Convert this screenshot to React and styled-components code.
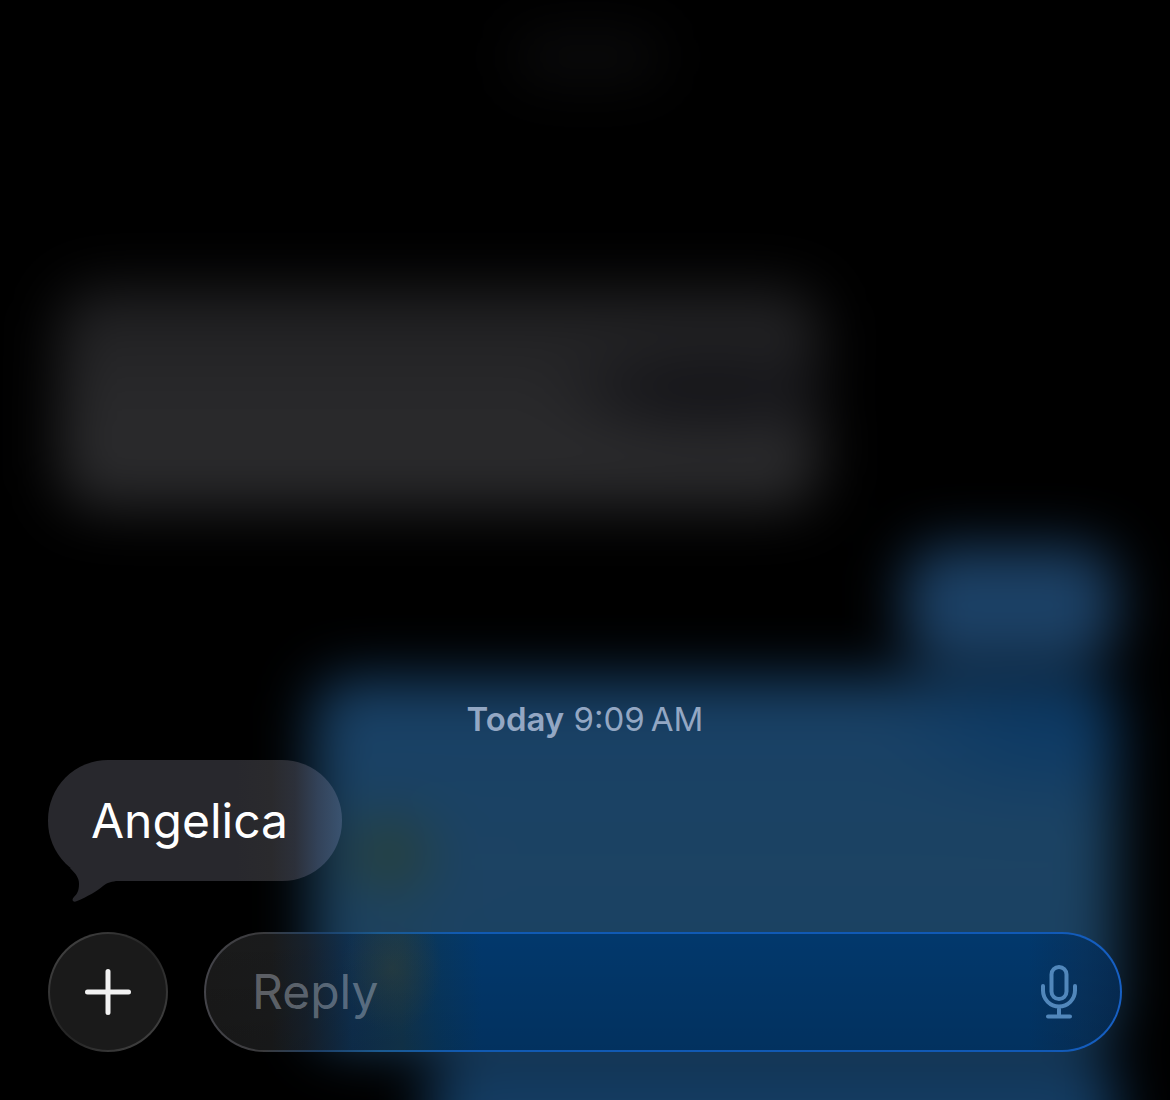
import React, { useState } from 'react';
import styled, { createGlobalStyle } from 'styled-components';

const GlobalStyle = createGlobalStyle`
  *, *::before, *::after {
    box-sizing: border-box;
  }
  body {
    margin: 0;
    background: #000;
    font-family: Inter, 'Liberation Sans', sans-serif;
  }
`;

const Screen = styled.main`
  position: relative;
  min-height: 100vh;
  display: flex;
  flex-direction: column;
  justify-content: flex-end;
  overflow: hidden;
  padding: 48px;
  background: #000;
`;

/* the conversation, out of focus behind the open thread */
const Backdrop = styled.div`
  position: absolute;
  inset: 0;
  display: flex;
  flex-direction: column;
  padding: 32px 54px 0 60px;
  filter: blur(28px);
`;

const HeaderBlur = styled.div`
  flex: none;
  align-self: center;
  width: 150px;
  height: 50px;
  border-radius: 24px;
  background: #0b0b0c;
`;

const BlurBubble = styled.div`
  flex: none;
  align-self: ${({ $mine }) => ($mine ? 'flex-end' : 'flex-start')};
  width: ${({ $width }) => $width};
  height: ${({ $height }) => $height};
  margin-top: ${({ $gap }) => $gap};
  border-radius: 36px;
  background: ${({ $fill }) => $fill};
`;

const Thread = styled.section`
  position: relative;
  display: flex;
  flex-direction: column;
  align-items: flex-start;
`;

const Stamp = styled.time`
  align-self: center;
  margin-bottom: 21px;
  font-size: 33px;
  line-height: 40px;
  color: #93a7c3;

  & strong {
    font-weight: 600;
  }
`;

const Bubble = styled.p`
  position: relative;
  margin: 0 0 51px;
  padding: 32px 54px 32px 43px;
  border-radius: 60px;
  background: linear-gradient(
    to right,
    #28282d 0%,
    #28282d 64%,
    #2a2a2d 76%,
    #2c303a 84%,
    #33435a 92%,
    #3a5370 100%
  );
  font-size: 48px;
  line-height: 57px;
  color: #fff;
`;

const Tail = styled.svg`
  position: absolute;
  left: 18px;
  bottom: -21px;
  width: 50px;
  height: 40px;
`;

const Composer = styled.form`
  position: relative;
  display: flex;
  align-items: center;
  gap: 36px;
`;

const AddButton = styled.button`
  flex: none;
  display: flex;
  align-items: center;
  justify-content: center;
  width: 120px;
  height: 120px;
  padding: 0;
  border: 2px solid transparent;
  border-radius: 50%;
  background:
    linear-gradient(#1a1a1a, #1a1a1a) padding-box,
    linear-gradient(135deg, #4a4a4a, #262626 45%, #262626 55%, #4a4a4a) border-box;
  cursor: pointer;
`;

const Field = styled.div`
  flex: 1;
  display: flex;
  align-items: center;
  min-width: 0;
  height: 120px;
  padding: 0 43px 0 46px;
  border: 2px solid transparent;
  border-radius: 60px;
  background:
    linear-gradient(to bottom, rgba(0, 0, 0, 0), rgba(0, 0, 0, 0.12)) padding-box,
    radial-gradient(ellipse 50px 64px at 186px 34px, rgba(48, 64, 60, 0.6), rgba(48, 64, 60, 0)) padding-box,
    linear-gradient(
      to right,
      #1a1a1a 0,
      #1a1b1c 66px,
      #17212c 100px,
      #0f3050 146px,
      #12364f 196px,
      #08375f 232px,
      #02386c 276px,
      #02386c 90%,
      #07335f 96%,
      #062c54 100%
    ) padding-box,
    linear-gradient(
      to right,
      #44444a 0,
      #3a3a3c 60px,
      #1d4068 116px,
      #1b5a90 176px,
      #115ab2 260px,
      #1159b5 92%,
      #1760c4 100%
    ) border-box;
`;

const ReplyInput = styled.input`
  flex: 1;
  min-width: 0;
  padding: 0;
  border: 0;
  outline: 0;
  background: transparent;
  font-family: inherit;
  font-size: 48px;
  line-height: 58px;
  color: #fff;

  &::placeholder {
    color: rgba(190, 198, 210, 0.42);
    opacity: 1;
  }
`;

const MicButton = styled.button`
  flex: none;
  display: flex;
  padding: 0;
  border: 0;
  background: transparent;
  color: #5187bb;
  cursor: pointer;
`;

const grayFill = `
  radial-gradient(ellipse 170px 44px at 86% 47%, #141418 50%, transparent),
  linear-gradient(to bottom, #1e1e20, #29292b 50%, #2b2b2d)
`;

const blueFill = `
  radial-gradient(ellipse 56px 52px at 76px 176px, rgba(48, 62, 30, 0.95), transparent),
  radial-gradient(ellipse 50px 60px at 80px 304px, rgba(48, 62, 54, 0.6), transparent),
  radial-gradient(ellipse 180px 90px at 92% 12%, #0a3864, transparent),
  linear-gradient(to bottom, #184066, #1c4363 50%, #1a4062)
`;

function PlusIcon() {
  return (
    <svg width="46" height="46" viewBox="0 0 46 46" aria-hidden="true">
      <path d="M23 2.5v41M2.5 23h41" stroke="#f2f2f2" strokeWidth="5" strokeLinecap="round" />
    </svg>
  );
}

function MicIcon() {
  return (
    <svg
      width="36"
      height="54"
      viewBox="0 0 36 54"
      fill="none"
      stroke="currentColor"
      strokeWidth="4"
      strokeLinecap="round"
      aria-hidden="true"
    >
      <rect x="10.5" y="2" width="15" height="32" rx="7.5" />
      <path d="M2 21v4.500a16 16 0 0 0 32 0V21M18 41.500V51M7 51.500h22" />
    </svg>
  );
}

export default function App() {
  const [reply, setReply] = useState('');

  function handleSubmit(event) {
    event.preventDefault();
    setReply('');
  }

  return (
    <Screen>
      <GlobalStyle />
      <Backdrop aria-hidden="true">
        <HeaderBlur />
        <BlurBubble $width="72%" $height="220px" $gap="206px" $fill={grayFill} />
        <BlurBubble $mine $width="20%" $height="118px" $gap="38px" $fill="#1c4166" />
        <BlurBubble $mine $width="76%" $height="368px" $gap="14px" $fill={blueFill} />
        <BlurBubble $mine $width="65%" $height="180px" $gap="8px" $fill="#143c62" />
      </Backdrop>

      <Thread>
        <Stamp>
          <strong>Today</strong> 9:09{'\u202f'}AM
        </Stamp>
        <Bubble>
          Angelica
          <Tail viewBox="0 0 50 40" aria-hidden="true">
            <path
              d="M4 6C10 12 13 16 13 22C13 29 11 32 8 35C5 38 7 41 11 39C21 35 31 29 37 24C41 21 44 20 50 19V6Z"
              fill="#28282d"
            />
          </Tail>
        </Bubble>
      </Thread>

      <Composer onSubmit={handleSubmit}>
        <AddButton type="button" aria-label="Add attachment">
          <PlusIcon />
        </AddButton>
        <Field>
          <ReplyInput
            type="text"
            name="reply"
            aria-label="Reply"
            placeholder="Reply"
            value={reply}
            onChange={(event) => setReply(event.target.value)}
          />
          <MicButton type="button" aria-label="Dictate">
            <MicIcon />
          </MicButton>
        </Field>
      </Composer>
    </Screen>
  );
}
